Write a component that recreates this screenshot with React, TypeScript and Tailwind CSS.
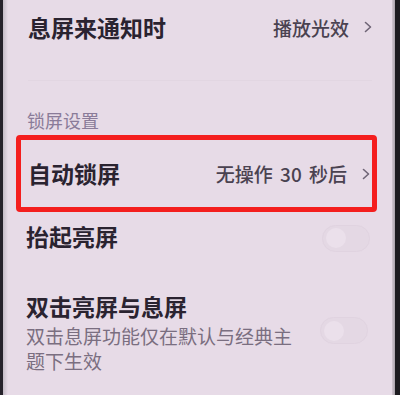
import React from "react";

const Chevron = () => (
  <svg width="8" height="12" viewBox="0 0 8 12" className="shrink-0">
    <polyline points="1.5,1.5 6.5,6 1.5,10.5" fill="none" stroke="#6f6576" strokeWidth="1.6" strokeLinecap="round" strokeLinejoin="round" />
  </svg>
);

const Toggle = () => (
  <div className="w-[48px] h-[27px] rounded-full bg-[#e4d8e4] border border-[#e0d3e0] flex items-center pl-[3px] shrink-0">
    <div className="w-[20px] h-[20px] rounded-full bg-[#ebe0eb]" />
  </div>
);

export default function App() {
  return (
    <div
      className="w-[400px] h-[395px] overflow-hidden flex bg-[#e7dbe7]"
      style={{ fontFamily: '"Noto Sans CJK SC", "Noto Sans", sans-serif' }}
    >
      <div className="w-[3px] bg-[#26232b] shrink-0" />
      <div className="w-[5px] bg-gradient-to-r from-[#c4bcc6] to-[#e7dbe7] shrink-0" />
      <div className="flex-1 flex flex-col">
        <div className="h-[54px] flex items-center justify-between pl-[20px] pr-[20px]">
          <span className="text-[23px] leading-[23px] font-bold text-[#2a2330]">息屏来通知时</span>
          <div className="flex items-center gap-[15px]">
            <span className="text-[19px] leading-[19px] font-medium text-[#4a4250]">播放光效</span>
            <Chevron />
          </div>
        </div>
        <div className="mt-[26px] h-[1px] mx-[20px] bg-[#e2d6e2]" />
        <div className="mt-[30px] pl-[19px] text-[18px] leading-[18px] text-[#8a7b99]">锁屏设置</div>
        <div className="mt-[6px] ml-[8px] mr-[15px] h-[77px] border-[5px] border-[#f41e1e] rounded-[4px] flex items-center justify-between pl-[7px] pr-[2px]">
          <span className="text-[23px] leading-[23px] font-bold text-[#2a2330]">自动锁屏</span>
          <div className="flex items-center gap-[15px]">
            <span className="text-[19px] leading-[19px] font-medium text-[#4a4250] [word-spacing:3px]">无操作 30 秒后</span>
            <Chevron />
          </div>
        </div>
        <div className="h-[52px] flex items-center justify-between pl-[18px] pr-[22px]">
          <span className="text-[23px] leading-[23px] font-bold text-[#2a2330] mt-[-4px]">抬起亮屏</span>
          <Toggle />
        </div>
        <div className="pt-[31px] flex items-start justify-between pl-[18px] pr-[24px]">
          <div className="flex flex-col">
            <span className="text-[23px] leading-[23px] font-bold text-[#2a2330]">双击亮屏与息屏</span>
            <span className="mt-[5px] w-[280px] text-[19px] leading-[25px] text-[#7a6e80]">
              双击息屏功能仅在默认与经典主题下生效
            </span>
          </div>
          <div className="mt-[22px]">
            <Toggle />
          </div>
        </div>
      </div>
      <div className="w-[3px] bg-gradient-to-r from-[#d2c8d2] to-[#a9a2aa] shrink-0" />
      <div className="w-[5px] bg-[#1c1b1f] shrink-0" />
    </div>
  );
}
